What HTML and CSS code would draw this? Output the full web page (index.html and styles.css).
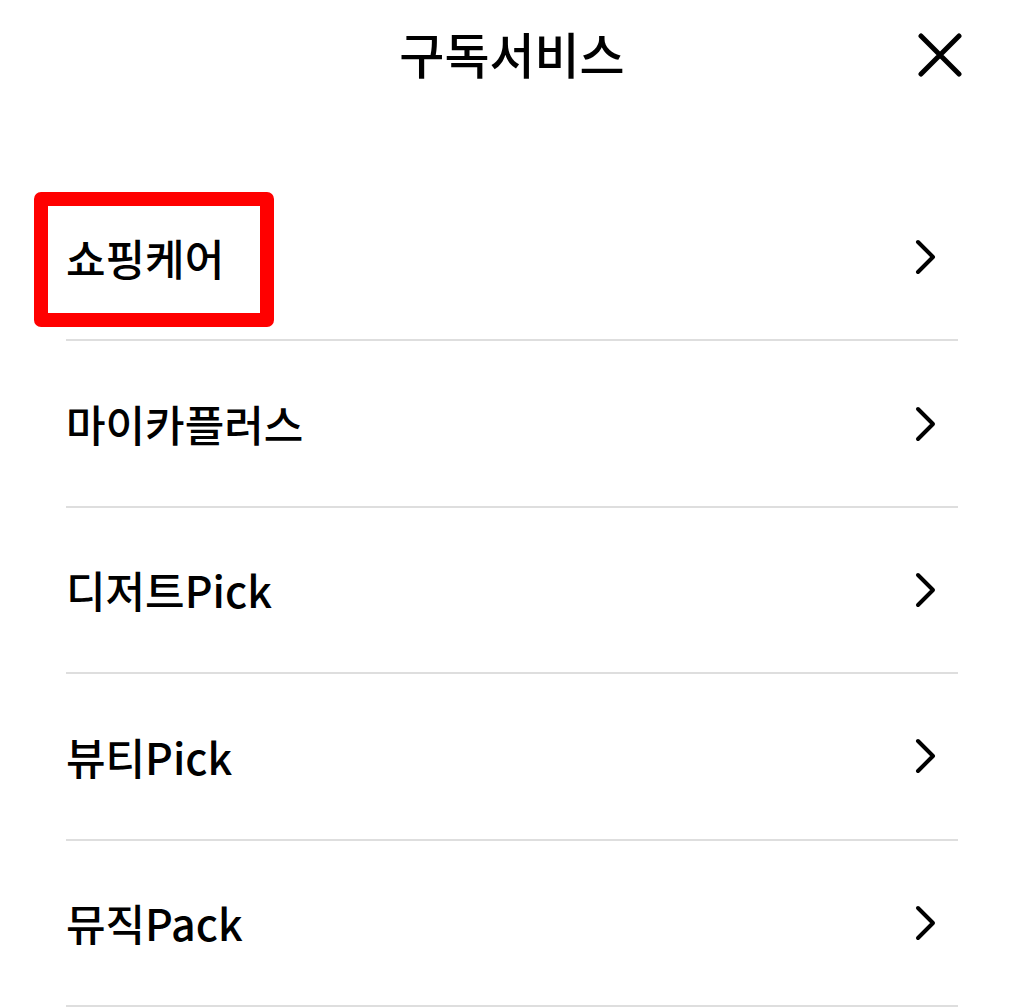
FILE: index.html
```html
<!DOCTYPE html>
<html lang="ko">
<head>
<meta charset="utf-8">
<title>구독서비스</title>
<link rel="stylesheet" href="styles.css">
</head>
<body>
<div class="page">
  <header class="header">
    <h1 class="title">구독서비스</h1>
    <button class="close" aria-label="닫기">
      <svg width="44" height="44" viewBox="0 0 44 44"><path d="M3 3 L41 41 M41 3 L3 41" stroke="#000" stroke-width="5" stroke-linecap="round" fill="none"/></svg>
    </button>
  </header>
  <ul class="list">
    <li class="item"><span class="label highlight">쇼핑케어</span><svg class="chev" width="24" height="36" viewBox="0 0 24 36"><path d="M4 3 L19 18 L4 33" stroke="#000" stroke-width="4" stroke-linecap="round" stroke-linejoin="round" fill="none"/></svg></li>
    <li class="item"><span class="label">마이카플러스</span><svg class="chev" width="24" height="36" viewBox="0 0 24 36"><path d="M4 3 L19 18 L4 33" stroke="#000" stroke-width="4" stroke-linecap="round" stroke-linejoin="round" fill="none"/></svg></li>
    <li class="item"><span class="label">디저트Pick</span><svg class="chev" width="24" height="36" viewBox="0 0 24 36"><path d="M4 3 L19 18 L4 33" stroke="#000" stroke-width="4" stroke-linecap="round" stroke-linejoin="round" fill="none"/></svg></li>
    <li class="item"><span class="label">뷰티Pick</span><svg class="chev" width="24" height="36" viewBox="0 0 24 36"><path d="M4 3 L19 18 L4 33" stroke="#000" stroke-width="4" stroke-linecap="round" stroke-linejoin="round" fill="none"/></svg></li>
    <li class="item"><span class="label">뮤직Pack</span><svg class="chev" width="24" height="36" viewBox="0 0 24 36"><path d="M4 3 L19 18 L4 33" stroke="#000" stroke-width="4" stroke-linecap="round" stroke-linejoin="round" fill="none"/></svg></li>
  </ul>
</div>
</body>
</html>
```
FILE: styles.css
```css
*, *::before, *::after { box-sizing: border-box; }
html, body {
  margin: 0;
  padding: 0;
  background: #fff;
  font-family: "Noto Sans CJK KR", "Noto Sans", sans-serif;
  color: #000;
}
.page {
  width: 1024px;
  height: 1007px;
  overflow: hidden;
}
.header {
  position: relative;
  height: 110px;
  display: flex;
  align-items: center;
  justify-content: center;
}
.title {
  margin: 0;
  font-size: 49px;
  font-weight: 500;
  line-height: 1;
  position: relative;
  top: -3px;
}
.close {
  position: absolute;
  right: 62px;
  top: 33px;
  width: 44px;
  height: 44px;
  padding: 0;
  border: 0;
  background: none;
  display: flex;
}
.list {
  list-style: none;
  margin: 65px 0 0;
  padding: 0 66px 0 66px;
}
.item {
  height: 166.4px;
  border-bottom: 2px solid #dedede;
  display: flex;
  align-items: center;
  justify-content: space-between;
  padding-right: 20px;
}
.label {
  font-size: 43px;
  font-weight: 500;
  line-height: 1;
  position: relative;
}
.highlight::before {
  content: "";
  position: absolute;
  left: -32px;
  top: -44px;
  width: 240px;
  height: 135px;
  border: 14px solid #ff0000;
  border-radius: 7px;
}
.chev {
  display: block;
}
```
